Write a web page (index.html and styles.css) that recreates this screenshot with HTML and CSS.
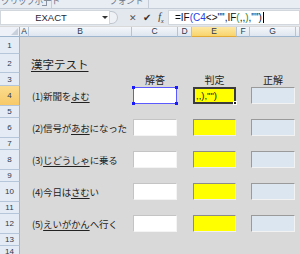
FILE: index.html
```html
<!DOCTYPE html>
<html lang="ja">
<head>
<meta charset="utf-8">
<link rel="stylesheet" href="styles.css">
</head>
<body>
<div class="app">
  <div class="ribbon">
    <span class="grp g1">クリップボード</span><span class="launch"></span><span class="sep"></span>
    <span class="grp g2">フォント</span><span class="sep"></span>
  </div>
  <div class="fbar">
    <div class="namebox"><span class="nm">EXACT</span><span class="dd"></span></div>
    <div class="fbtns"><span class="grip"></span><span class="x">✕</span><span class="ok">✔</span><span class="fx">f<sub>x</sub></span></div>
    <div class="finput">=IF<span class="pb">(C4</span>&lt;&gt;"",IF<span class="pg">(</span>,,<span class="pg">)</span>,"")<span class="caret"></span></div>
  </div>
  <div class="sheet">
    <div class="row hrow">
      <div class="corner"><span class="tri"></span></div>
      <div class="ch">A</div><div class="ch">B</div><div class="ch">C</div><div class="ch">D</div><div class="ch sel">E</div><div class="ch">F</div><div class="ch">G</div><div class="ch"></div>
    </div>
    <div class="row r17"><div class="rh">1</div></div>
    <div class="row r19"><div class="rh">2</div><div></div><div class="title"><u>漢字テスト</u></div></div>
    <div class="row r13"><div class="rh">3</div><div></div><div></div><div class="hd">解答</div><div></div><div class="hd">判定</div><div></div><div class="hd">正解</div></div>

    <div class="row r20"><div class="rh sel">4</div><div></div><div class="lbl">(1)新聞を<u>よむ</u></div>
      <div class="cell"><div class="box wbox picked"><span class="hd1"></span><span class="hd2"></span><span class="hd3"></span><span class="hd4"></span></div></div><div></div>
      <div class="cell"><div class="box ybox editing"><span class="etext">,,),"")</span><span class="fh"></span></div></div><div></div>
      <div class="cell"><div class="box bbox"></div></div></div>
    <div class="row r12"><div class="rh">5</div></div>

    <div class="row r20"><div class="rh">6</div><div></div><div class="lbl">(2)信号が<u>あお</u>になった</div>
      <div class="cell"><div class="box wbox"></div></div><div></div>
      <div class="cell"><div class="box ybox"></div></div><div></div>
      <div class="cell"><div class="box bbox"></div></div></div>
    <div class="row r12"><div class="rh">7</div></div>

    <div class="row r20"><div class="rh">8</div><div></div><div class="lbl">(3)<u>じどうしゃ</u>に乗る</div>
      <div class="cell"><div class="box wbox"></div></div><div></div>
      <div class="cell"><div class="box ybox"></div></div><div></div>
      <div class="cell"><div class="box bbox"></div></div></div>
    <div class="row r12"><div class="rh">9</div></div>

    <div class="row r20"><div class="rh">10</div><div></div><div class="lbl">(4)今日は<u>さむ</u>い</div>
      <div class="cell"><div class="box wbox"></div></div><div></div>
      <div class="cell"><div class="box ybox"></div></div><div></div>
      <div class="cell"><div class="box bbox"></div></div></div>
    <div class="row r12"><div class="rh">11</div></div>

    <div class="row r20"><div class="rh">12</div><div></div><div class="lbl">(5)<u>えいがかん</u>へ行く</div>
      <div class="cell"><div class="box wbox"></div></div><div></div>
      <div class="cell"><div class="box ybox"></div></div><div></div>
      <div class="cell"><div class="box bbox"></div></div></div>
    <div class="row r12"><div class="rh">13</div></div>
    <div class="row r12"><div class="rh">14</div></div>
  </div>
</div>
</body>
</html>
```
FILE: styles.css
```css
* { box-sizing: border-box; }
html, body { margin: 0; padding: 0; }
body {
  width: 300px;
  height: 254px;
  overflow: hidden;
  background: #d9d9d9;
  font-family: "Liberation Sans", "Noto Sans CJK JP", sans-serif;
}
.app { width: 300px; }

.ribbon {
  height: 9px;
  display: flex;
  align-items: flex-end;
  overflow: hidden;
  background: #e8edf3;
  border-bottom: 1px solid #c5cdd8;
}
.grp {
  font-family: "Noto Sans CJK JP", sans-serif;
  font-size: 9px;
  line-height: 9px;
  color: #6b7687;
  position: relative;
  top: -3px;
  white-space: nowrap;
}
.g1 { width: 40px; padding-left: 1px; letter-spacing: -0.6px; }
.launch {
  width: 5px; height: 5px;
  margin: 0 0 2px 2px;
  border-right: 1px solid #8a94a3;
  border-bottom: 1px solid #8a94a3;
}
.sep { width: 1px; height: 9px; background: #c6ccd5; margin-left: 4px; }
.g2 { width: 92px; padding-left: 57px; letter-spacing: -0.5px; }

.fbar {
  height: 17px;
  display: flex;
  align-items: stretch;
  background: #e3e8ef;
  padding-top: 1px;
  padding-bottom: 1px;
}
.namebox {
  width: 110px;
  background: #fff;
  border: 1px solid #d2d7de;
  display: flex;
  align-items: center;
  position: relative;
}
.nm {
  width: 100px;
  text-align: center;
  font-size: 9.5px;
  color: #1f2a38;
}
.dd {
  width: 0; height: 0;
  border-left: 3px solid transparent;
  border-right: 3px solid transparent;
  border-top: 3px solid #333;
  margin-left: 1px;
}
.fbtns {
  width: 58px;
  display: flex;
  align-items: center;
  font-size: 9px;
  color: #444;
}
.grip {
  width: 8px; height: 13px;
  border: 1px solid #c0c6ce;
  border-left: none;
  border-radius: 0 7px 7px 0;
  background: #eef1f5;
  margin-right: 8px;
}
.x { color: #555; font-size: 9px; width: 14px; text-align: center; }
.ok { color: #333; font-size: 10px; width: 14px; text-align: center; }
.fx {
  font-family: "Liberation Serif", serif;
  font-style: italic;
  font-size: 10px;
  color: #333;
  width: 14px;
  text-align: center;
}
.fx sub { font-size: 6px; }
.finput {
  flex: 1;
  background: #fff;
  border: 1px solid #d2d7de;
  padding-left: 6px;
  font-size: 10px;
  line-height: 13px;
  color: #111;
  white-space: nowrap;
  display: flex;
  align-items: center;
}
.pb { color: #2740e8; }
.pg { color: #2d8c2d; }
.caret { width: 1px; height: 11px; background: #000; margin-left: 1px; }

.sheet { margin-top: 1px; }
.row {
  display: grid;
  grid-template-columns: 20px 9px 103px 46px 14px 45px 13px 46px 1fr;
}
.hrow { height: 10px; }
.r17 { height: 17px; }
.r19 { height: 19px; }
.r13 { height: 13px; }
.r20 { height: 20px; }
.r12 { height: 12px; }

.corner {
  background: #eef2f8;
  border-right: 1px solid #9eb6ce;
  border-bottom: 1px solid #9eb6ce;
  position: relative;
}
.tri {
  position: absolute;
  right: 1px; bottom: 1px;
  width: 0; height: 0;
  border-left: 7px solid transparent;
  border-bottom: 7px solid #c7d0db;
}
.ch {
  background: linear-gradient(#f4f7fb, #dfe6ef);
  border-right: 1px solid #b4c3d6;
  border-bottom: 1px solid #9eb6ce;
  font-size: 8.5px;
  line-height: 9px;
  text-align: center;
  color: #2c3a4c;
}
.ch.sel {
  background: linear-gradient(#fde8a6, #f9d46a);
  border-bottom-color: #e3a935;
}
.rh {
  background: #e4ebf5;
  border-right: 1px solid #9eb6ce;
  border-bottom: 1px solid #b6c6da;
  font-size: 8px;
  color: #2c3a4c;
  display: flex;
  align-items: center;
  justify-content: center;
}
.rh.sel {
  background: linear-gradient(#fbdc8e, #f7c969);
  border-right-color: #e3a935;
}

.title {
  font-family: "Noto Sans CJK JP", sans-serif;
  font-size: 11.5px;
  color: #222;
  display: flex;
  align-items: center;
  padding-left: 2px;
  padding-top: 1px;
}
.title u, .lbl u { text-underline-offset: 2px; text-decoration-thickness: 1px; }
.hd {
  font-family: "Noto Sans CJK JP", sans-serif;
  font-size: 10px;
  color: #222;
  text-align: center;
  line-height: 13px;
}
.lbl {
  font-family: "Noto Sans CJK JP", sans-serif;
  font-size: 9.5px;
  letter-spacing: -0.2px;
  color: #222;
  display: flex;
  align-items: center;
  padding-left: 3px;
  white-space: nowrap;
}
.cell { display: flex; align-items: flex-start; }
.box {
  margin: 1px 0 0 1px;
  height: 17px;
  width: calc(100% - 2px);
  border: 1px solid;
  position: relative;
}
.wbox { background: #fff; border-color: #c4c4c4 #f4f4f4 #f4f4f4 #c4c4c4; }
.ybox { background: #ffff00; border-color: #8c8c8c #f0f0f0 #f0f0f0 #8c8c8c; }
.bbox { background: #dce6f1; border-color: #9a9a9a #f2f2f2 #f2f2f2 #9a9a9a; }

.picked { border: 1px solid #5a5aff; }
.hd1, .hd2, .hd3, .hd4 {
  position: absolute;
  width: 3px; height: 3px;
  background: #1a1aff;
}
.hd1 { left: -2px; top: -2px; }
.hd2 { right: -2px; top: -2px; }
.hd3 { left: -2px; bottom: -2px; }
.hd4 { right: -2px; bottom: -2px; }

.editing {
  border: 2px solid #3c3c3c;
  display: flex;
  align-items: center;
  overflow: visible;
}
.etext {
  font-size: 9.5px;
  color: #111;
  padding-left: 1px;
  white-space: nowrap;
  overflow: hidden;
}
.fh {
  position: absolute;
  right: -3px; bottom: -3px;
  width: 4px; height: 4px;
  background: #222;
  border: 1px solid #fff;
}
```
